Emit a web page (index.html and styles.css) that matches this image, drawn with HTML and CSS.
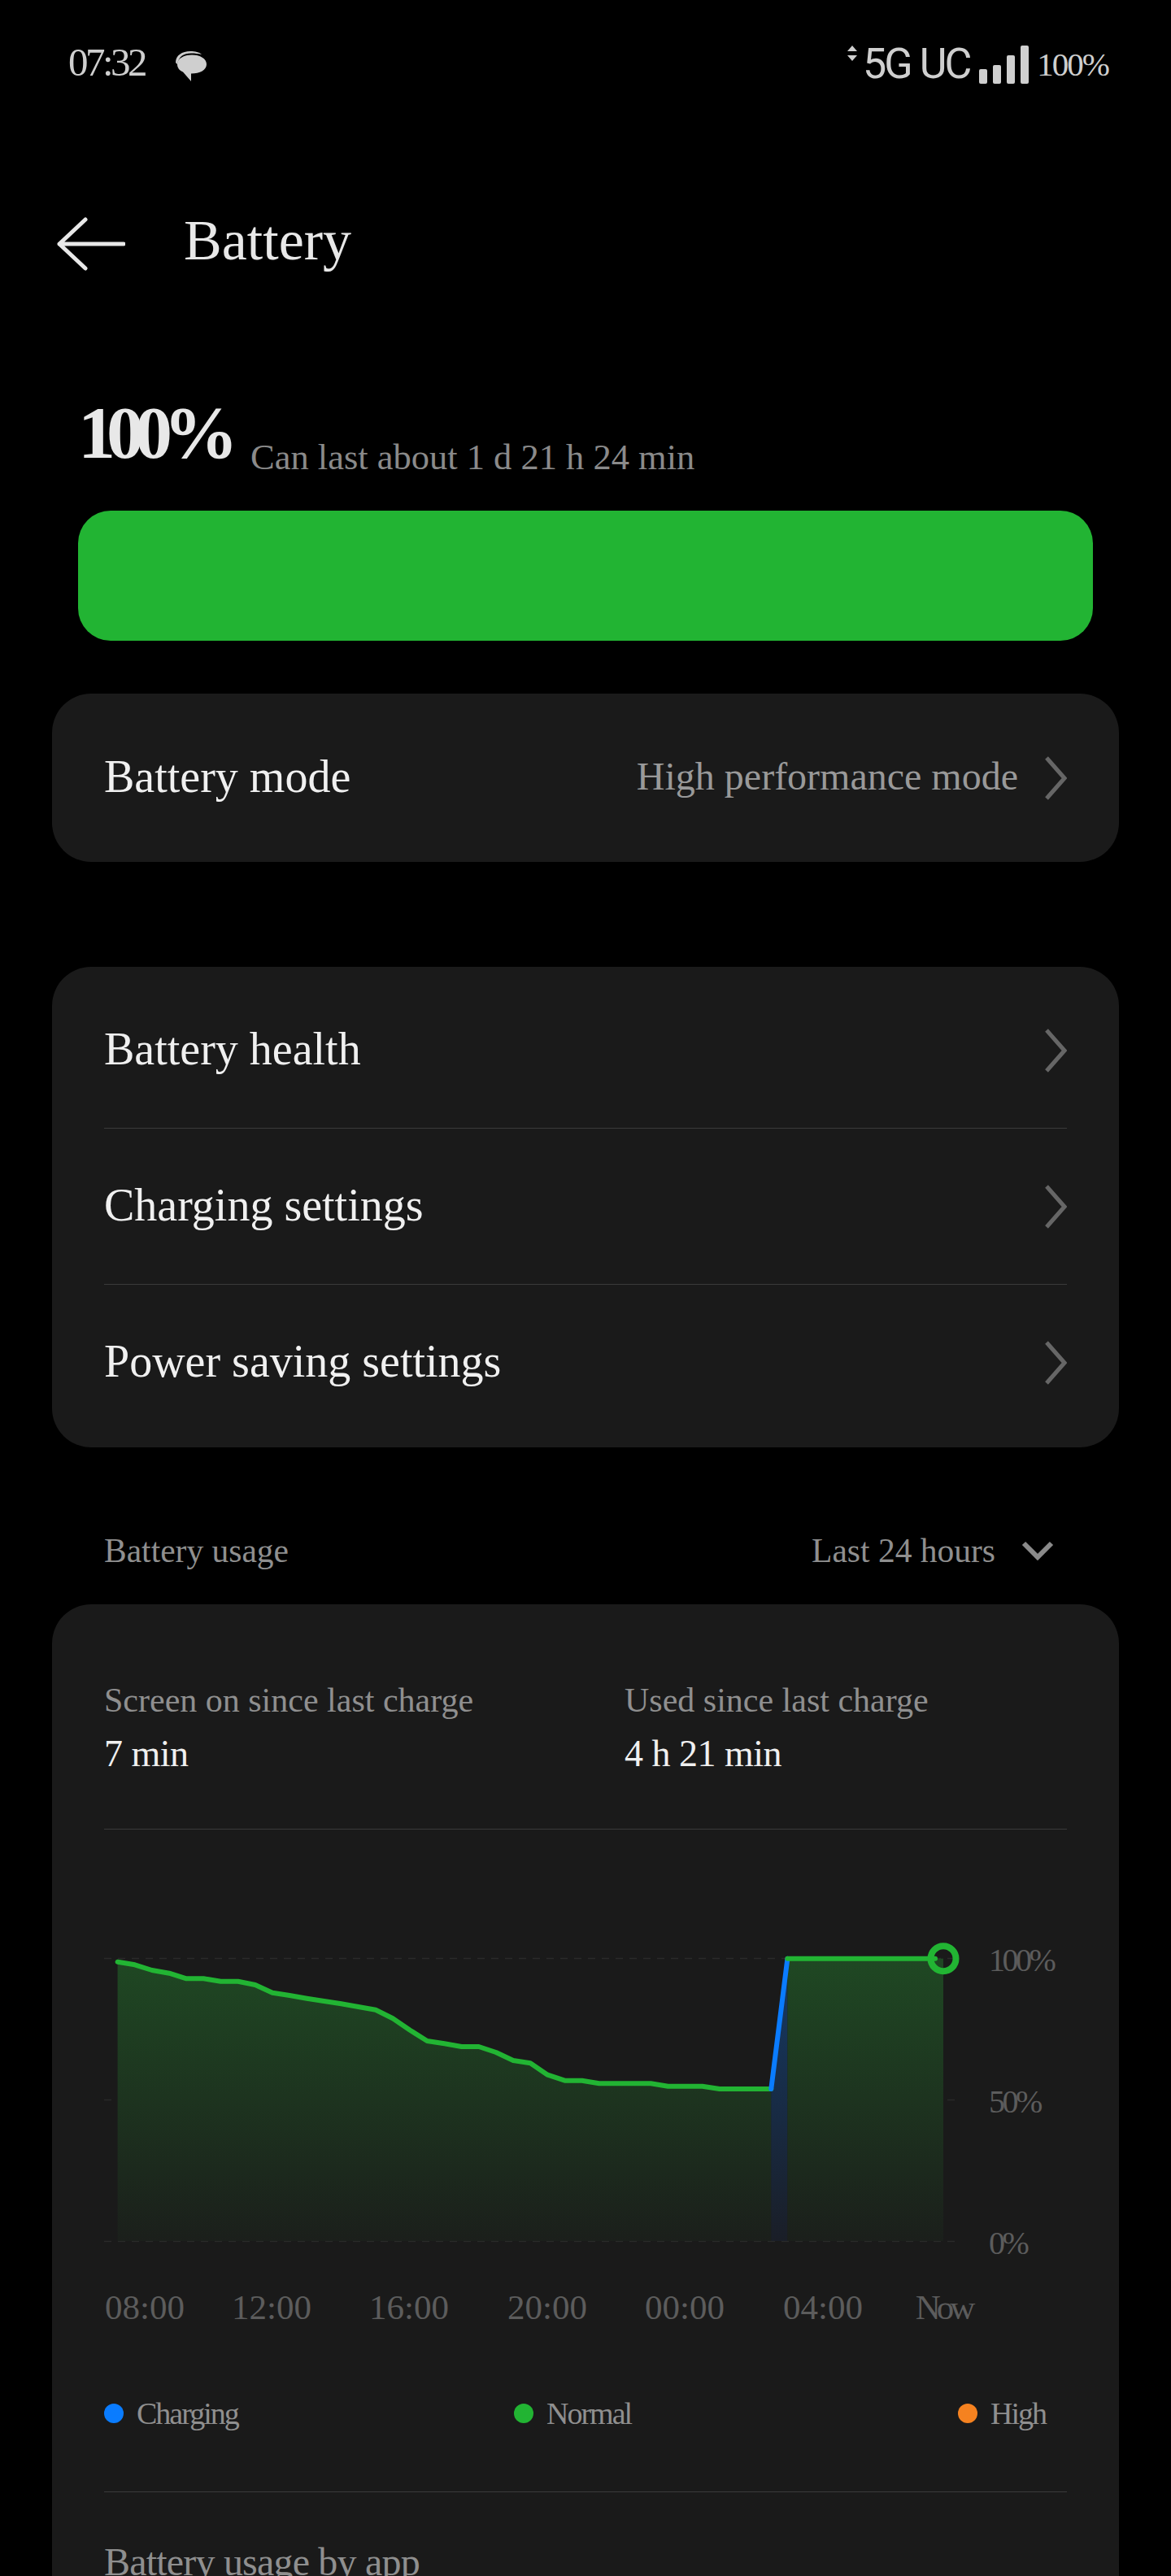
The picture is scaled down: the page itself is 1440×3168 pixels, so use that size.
FILE: index.html
```html
<!DOCTYPE html>
<html lang="en">
<head>
  <meta charset="UTF-8" />
  <meta name="viewport" content="width=device-width, initial-scale=1.0"/>
  <title>Battery</title>
  <link rel="stylesheet" href="styles.css">
</head>
<body>
  <div class="page">
    <div class="status-bar">
      <div class="status-left">
        <span class="time">07:32</span>
        <svg class="bubble" width="42" height="42" viewBox="0 0 42 42">
          <path d="M2 17C2 8 10 3 20 3c6 0 11 1 14 4-4-1-8-1.500-13-1.500C12 5.500 6 9 4 19z" fill="#cfcfcf"/>
          <path d="M4 19C4 12 12 7.500 22 7.500S40 12 40 19 32 30.500 21 30.500V40L11 28.500C7 27 4 23.500 4 19z" fill="#cfcfcf"/>
        </svg>
      </div>
      <div class="status-right">
        <svg class="updown" width="12" height="20" viewBox="0 0 12 20">
          <path d="M6 0l6 7H0zM0 12h12l-6 7z" fill="#cfcfcf"/>
        </svg>
        <span class="network">5G</span>
        <span class="network uc">UC</span>
        <div class="signal">
          <span class="bar bar-1"></span>
          <span class="bar bar-2"></span>
          <span class="bar bar-3"></span>
          <span class="bar bar-4"></span>
        </div>
        <span class="level">100%</span>
      </div>
    </div>

    <div class="title-bar">
      <svg width="84" height="66" viewBox="0 0 84 66">
        <path d="M35 3L3 33l32 30M3 33h79" fill="none" stroke="#e8e8e8" stroke-width="5" stroke-linecap="round" stroke-linejoin="round"/>
      </svg>
      <h1>Battery</h1>
    </div>

    <div class="summary">
      <span class="percent">100%</span>
      <span class="estimate">Can last about 1 d 21 h 24 min</span>
    </div>
    <div class="battery-bar"></div>

    <div class="card mode-card">
      <div class="row">
        <span class="row-label">Battery mode</span>
        <span class="row-value">High performance mode</span>
        <svg class="chevron" width="28" height="54" viewBox="0 0 28 54"><path d="M3 2l22 25L3 52" fill="none" stroke="#666" stroke-width="5"/></svg>
      </div>
    </div>

    <div class="card list-card">
      <div class="row divided">
        <span class="row-label">Battery health</span>
        <svg class="chevron" width="28" height="54" viewBox="0 0 28 54"><path d="M3 2l22 25L3 52" fill="none" stroke="#666" stroke-width="5"/></svg>
      </div>
      <div class="row divided">
        <span class="row-label">Charging settings</span>
        <svg class="chevron" width="28" height="54" viewBox="0 0 28 54"><path d="M3 2l22 25L3 52" fill="none" stroke="#666" stroke-width="5"/></svg>
      </div>
      <div class="row">
        <span class="row-label">Power saving settings</span>
        <svg class="chevron" width="28" height="54" viewBox="0 0 28 54"><path d="M3 2l22 25L3 52" fill="none" stroke="#666" stroke-width="5"/></svg>
      </div>
    </div>

    <div class="usage-head">
      <span>Battery usage</span>
      <div class="range">
        <span>Last 24 hours</span>
        <svg width="40" height="24" viewBox="0 0 40 24"><path d="M3 3l17 17L37 3" fill="none" stroke="#8a8a8a" stroke-width="6"/></svg>
      </div>
    </div>

    <div class="card usage-card">
      <div class="stats">
        <div class="stat">
          <div class="stat-label">Screen on since last charge</div>
          <div class="stat-value">7 min</div>
        </div>
        <div class="stat">
          <div class="stat-label">Used since last charge</div>
          <div class="stat-value">4 h 21 min</div>
        </div>
      </div>

      <svg class="chart" width="1184" height="490" viewBox="128 2380 1184 490">
        <defs>
          <linearGradient id="fill-green" gradientUnits="userSpaceOnUse" x1="0" y1="2408" x2="0" y2="2756">
            <stop offset="0" stop-color="#1f4823"/>
            <stop offset="1" stop-color="#1b1f1b"/>
          </linearGradient>
          <linearGradient id="fill-blue" gradientUnits="userSpaceOnUse" x1="0" y1="2408" x2="0" y2="2756">
            <stop offset="0" stop-color="#153a66"/>
            <stop offset="1" stop-color="#1a1e27"/>
          </linearGradient>
        </defs>
        <g class="grid">
          <line x1="128" y1="2408.5" x2="1176" y2="2408.5"/>
          <line x1="128" y1="2582.5" x2="1176" y2="2582.5"/>
          <line x1="128" y1="2756.5" x2="1176" y2="2756.5"/>
        </g>
        <polygon fill="url(#fill-green)" points="144.6,2412.7 165.8,2416.3 186.9,2423 208.1,2426.7 229.2,2433.3 250.4,2433.3 271.5,2436.7 292.7,2436.7 313.8,2441 335,2450.7 356.1,2454 377.3,2457.7 398.4,2461 419.6,2464.3 440.7,2468 461.9,2471.7 483,2482.3 504.2,2496.7 525.3,2510 546.5,2513.3 567.6,2517 588.8,2517 609.9,2524 631.1,2534 652.2,2537.3 673.4,2551.7 694.5,2558.7 715.7,2558.7 736.8,2562.3 800.3,2562.3 821.4,2565.7 863.7,2565.7 884.9,2569 948.3,2569 948.3,2756 144.6,2756"/>
        <polygon fill="url(#fill-blue)" points="948.3,2569 968.4,2408.7 968.4,2756 948.3,2756"/>
        <rect fill="url(#fill-green)" x="968.4" y="2408.7" width="191.6" height="347.3"/>
        <polyline class="line-normal" points="144.6,2412.7 165.8,2416.3 186.9,2423 208.1,2426.7 229.2,2433.3 250.4,2433.3 271.5,2436.7 292.7,2436.7 313.8,2441 335,2450.7 356.1,2454 377.3,2457.7 398.4,2461 419.6,2464.3 440.7,2468 461.9,2471.7 483,2482.3 504.2,2496.7 525.3,2510 546.5,2513.3 567.6,2517 588.8,2517 609.9,2524 631.1,2534 652.2,2537.3 673.4,2551.7 694.5,2558.7 715.7,2558.7 736.8,2562.3 800.3,2562.3 821.4,2565.7 863.7,2565.7 884.9,2569 948.3,2569"/>
        <line class="line-charging" x1="948.3" y1="2569" x2="968.4" y2="2408.7"/>
        <line class="line-normal" x1="968.4" y1="2408.7" x2="1150" y2="2408.7"/>
        <circle class="dot-now" cx="1160" cy="2408.7" r="15.5"/>
        <text class="axis-y" x="1216" y="2424">100%</text>
        <text class="axis-y" x="1216" y="2598">50%</text>
        <text class="axis-y" x="1216" y="2772">0%</text>
        <text class="axis-x" x="178" y="2852">08:00</text>
        <text class="axis-x" x="334" y="2852">12:00</text>
        <text class="axis-x" x="503" y="2852">16:00</text>
        <text class="axis-x" x="673" y="2852">20:00</text>
        <text class="axis-x" x="842" y="2852">00:00</text>
        <text class="axis-x" x="1012" y="2852">04:00</text>
        <text class="axis-x axis-now" x="1160" y="2852">Now</text>
      </svg>

      <div class="legend">
        <div class="legend-item"><span class="dot charging"></span>Charging</div>
        <div class="legend-item"><span class="dot normal"></span>Normal</div>
        <div class="legend-item"><span class="dot high"></span>High</div>
      </div>

      <div class="by-app">Battery usage by app</div>
    </div>
  </div>
</body>
</html>
```

FILE: styles.css
```css
html, body {
  margin: 0;
  padding: 0;
  background: #000;
}

body {
  font-family: "Liberation Serif", serif;
  color: #f0f0f0;
}

.page {
  width: 1440px;
  height: 3168px;
  overflow: hidden;
}

.status-bar {
  height: 170px;
  padding: 50px 77px 0 84px;
  box-sizing: border-box;
  display: flex;
  justify-content: space-between;
  align-items: flex-start;
  color: #cfcfcf;
}

.status-left {
  display: flex;
  align-items: flex-start;
  gap: 36px;
}

.time {
  font-size: 49px;
  line-height: 54px;
  letter-spacing: -3.5px;
}

.bubble {
  margin-top: 10px;
}

.status-right {
  display: flex;
  align-items: flex-start;
}

.updown {
  margin: 6px 7px 0 0;
}

.network {
  font-family: Roboto, sans-serif;
  font-size: 52px;
  line-height: 58px;
  letter-spacing: -3px;
}

.uc {
  margin-left: 11px;
}

.signal {
  display: flex;
  align-items: flex-end;
  gap: 7px;
  height: 47px;
  margin: 6px 0 0 12px;
}

.bar {
  width: 10px;
  background: #cfcfcf;
  border-radius: 2px;
}

.bar-1 { height: 18px; }
.bar-2 { height: 23px; }
.bar-3 { height: 35px; }
.bar-4 { height: 47px; }

.level {
  font-size: 41px;
  line-height: 54px;
  letter-spacing: -2px;
  margin: 2px 0 0 10px;
}

.title-bar {
  display: flex;
  align-items: center;
  height: 66px;
  margin-top: 97px;
  padding-left: 70px;
  color: #e8e8e8;
}

.title-bar h1 {
  margin: 0 0 9px 72px;
  font-size: 70px;
  font-weight: normal;
  line-height: 66px;
}

.summary {
  display: flex;
  align-items: flex-start;
  margin-top: 153px;
  padding-left: 96px;
  height: 142px;
}

.percent {
  font-size: 92px;
  font-weight: bold;
  line-height: 92px;
  letter-spacing: -11px;
  color: #e8e8e8;
}

.estimate {
  font-size: 44.5px;
  line-height: 50px;
  color: #8a8a8a;
  margin: 51px 0 0 26px;
}

.battery-bar {
  width: 1248px;
  height: 160px;
  margin: 0 0 0 96px;
  background: #22b433;
  border-radius: 40px;
}

.card {
  width: 1312px;
  margin-left: 64px;
  background: #1a1a1a;
  border-radius: 48px;
}

.mode-card {
  margin-top: 65px;
  height: 207px;
  display: flex;
  align-items: center;
}

.list-card {
  margin-top: 129px;
  padding: 7px 0 8px;
}

.row {
  display: flex;
  align-items: center;
  width: 1184px;
  height: 192px;
  margin-left: 64px;
  box-sizing: border-box;
}

.divided {
  border-bottom: 1px solid #3a3a3a;
}

.row-label {
  font-size: 56px;
  flex: 1;
  margin-bottom: 4px;
}

.row-value {
  font-size: 48px;
  color: #999;
  margin: 0 32px 4px 0;
}

.usage-head {
  display: flex;
  justify-content: space-between;
  align-items: center;
  height: 60px;
  margin-top: 97px;
  padding: 0 144px 0 128px;
  font-size: 41.5px;
  color: #8f8f8f;
}

.range {
  display: flex;
  align-items: center;
  gap: 32px;
}

.usage-card {
  margin-top: 36px;
  padding: 0 64px;
  box-sizing: border-box;
  height: 1400px;
}

.stats {
  display: flex;
  height: 277px;
  padding-top: 93px;
  box-sizing: border-box;
  border-bottom: 1px solid #3a3a3a;
}

.stat {
  flex: none;
  width: 640px;
}

.stat:last-child {
  width: 544px;
}

.stat-label {
  font-size: 42px;
  line-height: 50px;
  color: #8f8f8f;
}

.stat-value {
  font-size: 46px;
  line-height: 60px;
  letter-spacing: -0.5px;
  margin-top: 11px;
}

.chart {
  display: block;
  margin-top: 130px;
}

.grid line {
  stroke: #2a2a2a;
  stroke-width: 1.5;
  stroke-dasharray: 9 8;
}

.line-normal,
.line-charging {
  fill: none;
  stroke: #22b433;
  stroke-width: 6;
  stroke-linecap: round;
  stroke-linejoin: round;
}

.line-charging {
  stroke: #0a7cff;
}

.dot-now {
  fill: none;
  stroke: #22b433;
  stroke-width: 8;
}

.axis-y,
.axis-x {
  font-size: 40px;
  fill: #5c5c5c;
}

.axis-y {
  letter-spacing: -3.5px;
}

.axis-x {
  font-size: 43px;
  text-anchor: middle;
}

.axis-now {
  letter-spacing: -5px;
}

.legend {
  display: flex;
  margin-top: 78px;
  height: 40px;
}

.legend-item {
  display: flex;
  align-items: center;
  gap: 16px;
  font-size: 38px;
  letter-spacing: -2px;
  color: #8f8f8f;
}

.legend-item:nth-child(1) { width: 504px; }
.legend-item:nth-child(2) { width: 546px; }

.dot {
  width: 24px;
  height: 24px;
  border-radius: 50%;
}

.charging { background: #0a7cff; }
.normal { background: #22b433; }
.high { background: #f58220; }

.by-app {
  margin-top: 76px;
  padding-top: 61px;
  border-top: 1px solid #3a3a3a;
  font-size: 48px;
  line-height: 50px;
  letter-spacing: -0.8px;
  color: #8f8f8f;
}
```
